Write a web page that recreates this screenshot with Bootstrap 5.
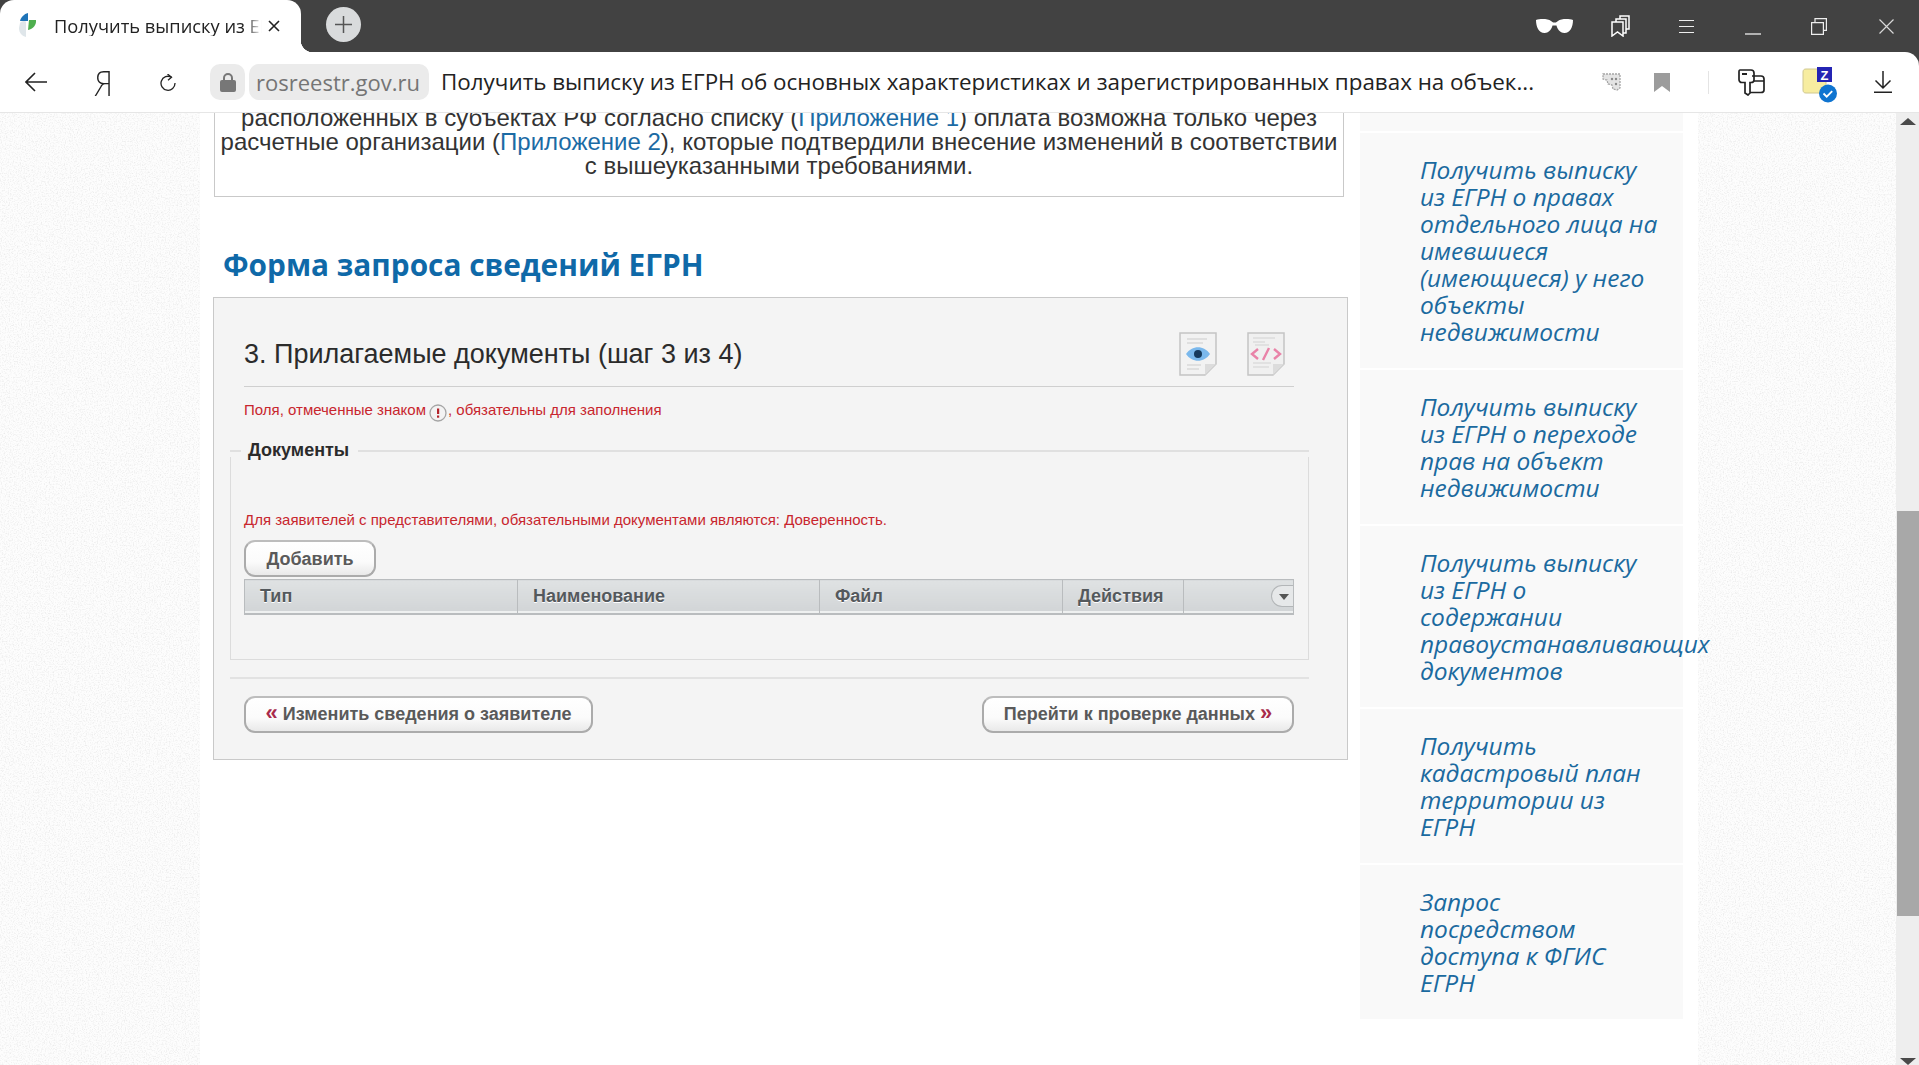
<!DOCTYPE html>
<html lang="ru"><head><meta charset="utf-8"><title>Получить выписку из ЕГРН</title>
<link href="https://cdn.jsdelivr.net/npm/bootstrap@5.3.0/dist/css/bootstrap.min.css" rel="stylesheet">
<style>
html,body{height:100%;margin:0}
body{font-family:"Liberation Sans",Arial,sans-serif;overflow:hidden;background:#fff;color:#333}
svg{display:block;flex:none}
.shell{height:100vh}
.strip{height:52px;background:#424242;flex:none}
.tabx{width:301px;height:52px;background:#fff;border-radius:14px 14px 0 0;position:relative;flex:none}
.tabx::after{content:"";position:absolute;left:100%;bottom:0;width:12px;height:12px;background:radial-gradient(circle at 100% 0,transparent 12px,#fff 12.5px)}
.fav{margin-left:19px;margin-top:13px}
.tabtitle{font:18.3px/1.1 "Open Sans",sans-serif;color:#222;margin-left:17px;margin-top:16px;width:208px;white-space:nowrap;overflow:hidden;-webkit-mask-image:linear-gradient(90deg,#000 92%,transparent);mask-image:linear-gradient(90deg,#000 92%,transparent)}
.tabclose{margin-left:6px;margin-top:20px}
.plus{width:35px;height:35px;border-radius:50%;background:#d9dbdc;margin-left:25px;margin-bottom:4px}
.i-glass{margin-left:auto}.i-marks{margin-left:38px}.i-menu{margin-left:49px}.i-min{margin-left:51px}.i-rest{margin-left:50px}.i-x{margin-left:52px;margin-right:25px}
.toolbar{background:#fff;flex:none;border-bottom:1px solid #e6e6e6;position:relative;box-sizing:content-box;height:60px;margin-bottom:-1px;z-index:2}
.toolbar>*{flex:none}
.cornerwrap{background:#424242;flex:none}
.toolround{border-top-right-radius:14px}
.i-back{margin-left:25px}
.ya{margin-left:46px;width:14px;font:300 36px/1 Lato,"Liberation Sans",sans-serif;color:#222;text-align:center;transform:scaleX(.78)}
.i-reload{margin-left:53px}
.lockpill{width:35px;height:36px;margin-left:34px;background:#ebebeb;border-radius:10px}
.dompill{width:180px;height:36px;margin-left:4px;background:#ebebeb;border-radius:10px;font:22px/36px "Open Sans",sans-serif;color:#757575;padding-left:7px;white-space:nowrap}
.urltitle{margin-left:12px;width:1101px;font:22.4px/36px "Open Sans",sans-serif;color:#222;white-space:nowrap;overflow:hidden}
.i-tr{margin-left:60px}.i-bm{margin-left:33px}.sep{width:1px;height:23px;background:#e4e4e4;margin-left:38px}.i-ext{margin-left:29px}.i-note{margin-left:37px;margin-top:6px}.i-dl{margin-left:36px}
.mainrow{flex:1 1 auto;min-height:0;overflow:hidden}
.gutl{width:200px;flex:none}.gutr{width:198px;flex:none}
.gutl svg,.gutr svg{width:100%;height:100%}
.center{width:1498px;flex:none;position:relative;z-index:1;background:#fff}
.leftc{width:1134px;margin-left:13px;flex:none}
.rightc{width:323px;margin-left:13px;flex:none}
.notice{margin:-6px 3px 0 1px;border:1px solid #c9c9c9;border-top:0;padding-bottom:18px;font-size:24px;line-height:24px;text-align:center;color:#333;white-space:nowrap}
.notice a,.sidecard a{color:#1b6ba5;text-decoration:none}
.formh{font:700 29.8px/40px "Open Sans",sans-serif;color:#0f69a8;margin:48px 0 12px 10px}
.panel{background:#f4f4f4;border:1px solid #c9c9c9;padding:0 38px 26px 16px;width:1135px}
.phead{margin:0 15px 0 14px;border-bottom:1px solid #cfcfcf;padding:34px 9px 10px 0;gap:30px}
.ptitle{font-size:27px;line-height:44px;color:#2b2b2b;margin:0;font-weight:400;margin-right:auto}
.docico{filter:blur(.5px)}
.rednote{color:#c8262e;font-size:15px;line-height:20px}
.rn1{margin:13px 14px 0;height:20px}
.rqi{display:inline-block;vertical-align:-7px;margin:0 1px 0 3px}
.legrow{height:24px;margin-top:19px}
.legrow::before{content:"";width:11px;height:2px;background:#e0e0e0}
.legrow::after{content:"";flex:1;height:2px;background:#e0e0e0}
.legtxt{font-size:18px;font-weight:700;color:#2b2b2b;padding:0 9px 3px 7px;line-height:24px}
.docbox{margin-top:-6px;border:1px solid #dcdcdc;border-top:0;padding:53px 13px 44px 13px;position:relative}
.skbtn{--bs-btn-padding-x:0;--bs-btn-padding-y:0;display:block;height:37px;background:linear-gradient(#fff,#fbfbfb 60%,#e9e9e9);border:2px solid #ababab;border-top-color:#bdbdbd;border-radius:11px;color:#5a5a5a;font-size:18px;font-weight:700;line-height:32px;text-align:center}
.addb{width:132px;margin-top:10px}
.backb{width:349px}.nextb{width:312px}
.arr{color:#a92b4b;font-weight:700;font-size:22px;line-height:20px}
.gridt{width:1050px;margin:2px 0 0;table-layout:fixed;border-collapse:collapse}
.gridt th{height:34px;padding:0 0 0 15px;background:linear-gradient(#dfe2e3,#d1d4d6);border:1px solid #b9bcbe;border-width:1px 0 2px 1px;box-shadow:inset 0 -3px 0 -1px #eef0f0;color:#54595d;font-size:18px;font-weight:700;text-shadow:0 1px 0 #fff;vertical-align:middle}
.gridt th:last-child{border-right:1px solid #b9bcbe;position:relative;padding:0}
.pillx{position:absolute;right:0;top:5px;width:22px;height:22px;border:1px solid #b3b6b8;border-right:0;border-radius:11px 0 0 11px;background:#e6e8e9}
.pillx::after{content:"";position:absolute;left:7px;top:8px;border:5px solid transparent;border-top:6px solid #555;border-bottom:0}
.hdiv{height:2px;background:#e2e2e2;margin-top:17px}
.btnrow{margin:17px 15px 0 14px}
.sidecard{background:#f9f9f9;padding:23px 23px 23px 60px;font:italic 400 24.5px/27px "Open Sans",sans-serif;margin-bottom:2px}
.sidecard a{color:#1b6a9f}
.sidefirst{height:19px;background:#f9f9f9;margin-bottom:2px}
.wordo{white-space:nowrap}
.vscroll{width:23px;flex:none;background:#eee;position:relative}
.thumb{position:absolute;left:1px;right:0;top:399px;height:405px;background:#a8a8a8}
.upa,.dna{position:absolute;left:4px;border:8px solid transparent}
.upa{top:6px;border-bottom:7px solid #4a4a4a;border-top:0}
.dna{bottom:0;border-top:7px solid #4a4a4a;border-bottom:0}
</style></head><body>
<div class="shell d-flex flex-column">
 <div class="strip d-flex align-items-center">
  <div class="tabx d-flex align-items-start align-self-start">
   <svg class="fav" width="18" height="24" viewBox="0 0 18 24"><path d="M1 10c.5-1 2-2 4-2l2 .5V24C3 23 0 20 0 15z" fill="#dfe6ea"/><path d="M1 8C2 4 5 1 9 0v8z" fill="#1f74b8"/><path d="M10 7h7c.6 5-3 9-8 10z" fill="#4faf4f"/></svg>
   <div class="tabtitle">Получить выписку из ЕГРН</div>
   <svg class="tabclose" width="12" height="12" viewBox="0 0 12 12"><path d="M1 1l10 10M11 1L1 11" stroke="#222" stroke-width="1.6"/></svg>
  </div>
  <div class="plus d-flex align-items-center justify-content-center"><svg width="17" height="17" viewBox="0 0 17 17"><path d="M8.5 0v17M0 8.5h17" stroke="#555" stroke-width="1.5"/></svg></div>
  <svg class="i-glass" width="37" height="14" viewBox="0 0 37 14"><path d="M0 1c4-1.400 12-1.400 15 1 1 .8 1.500 1.500 3.500 1.500S21 2.800 22 2c3-2.400 11-2.400 15-1 0 7-3 13-8.500 13-5 0-7.500-5-8-7.500h-4C16 9 13.500 14 8.500 14 3 14 0 8 0 1z" fill="#fff"/></svg>
  <svg class="i-marks" width="19" height="22" viewBox="0 0 19 22" fill="none" stroke="#fff" stroke-width="1.500"><path d="M1 7h11v14l-5.500-4L1 21z"/><path d="M5 7V4h10v14h-3M9 3.500V1h9v13h-3"/></svg>
  <svg class="i-menu" width="15" height="13" viewBox="0 0 15 13"><path d="M0 .5h15M0 6.500h15M0 12.500h15" stroke="#eee" stroke-width="1.200"/></svg>
  <svg class="i-min mt-3" width="16" height="2" viewBox="0 0 16 2"><path d="M0 1h16" stroke="#eee" stroke-width="1.300"/></svg>
  <svg class="i-rest" width="16" height="17" viewBox="0 0 16 17" fill="none" stroke="#eee" stroke-width="1.200"><path d="M.6 4.600h11.800v11.800H.6zM4 4.600V.6h11.400v11.800h-3"/></svg>
  <svg class="i-x" width="15" height="15" viewBox="0 0 15 15"><path d="M.5.500l14 14M14.500.500l-14 14" stroke="#d8d8d8" stroke-width="1.200"/></svg>
 </div>
 <div class="cornerwrap">
 <div class="toolbar toolround d-flex align-items-center">
  <svg class="i-back" width="22" height="20" viewBox="0 0 22 20" fill="none" stroke="#222" stroke-width="1.600"><path d="M22 10H1M10 1l-9 9 9 9"/></svg>
  <div class="ya">Я</div>
  <svg class="i-reload" width="16" height="17" viewBox="0 0 16 17" fill="none" stroke="#222" stroke-width="1.300"><path d="M11.500 3.200A7 7 0 1 0 15 9"/><path d="M7.500 0l4 3.200-3.500 3"/></svg>
  <div class="lockpill d-flex align-items-center justify-content-center"><svg width="16" height="20" viewBox="0 0 16 20"><path d="M4 9V6a4 4 0 0 1 8 0v3" fill="none" stroke="#777" stroke-width="2"/><rect y="8" width="16" height="12" rx="2" fill="#777"/></svg></div>
  <div class="dompill">rosreestr.gov.ru</div>
  <div class="urltitle">Получить выписку из ЕГРН об основных характеристиках и зарегистрированных правах на объек...</div>
  <svg class="i-tr" width="19" height="18" viewBox="0 0 19 18"><path d="M1 1h17v14l-3 2-4-1-1-4-4-1-1-4-4-1z" fill="#e4e4e4" stroke="#a5a5a5" stroke-width="1.300" stroke-dasharray="2 1"/><circle cx="10" cy="6" r="1.200" fill="#888"/><circle cx="14" cy="6" r="1.200" fill="#888"/><circle cx="14" cy="11" r="1.200" fill="#888"/></svg>
  <svg class="i-bm" width="16" height="19" viewBox="0 0 16 19"><path d="M0 0h16v19l-8-6-8 6z" fill="#9c9c9c"/></svg>
  <div class="sep"></div>
  <svg class="i-ext" width="27" height="27" viewBox="0 0 27 27" fill="none" stroke="#222" stroke-width="1.700"><path d="M2 1h11c2 0 3 1.500 3 3v7c0 1.500-1 2.500-3 2.500h-1V24l-2 2-3-2V13.500H4C2 13.500 1 12 1 10.500V3c0-1 .5-2 1-2z"/><path d="M4 5h5" stroke-width="2"/><path d="M14 7h9c2 0 3 1 3 3v11c0 1.500-1 2.500-3 2.500H12M16 12h10"/></svg>
  <svg class="i-note" width="36" height="36" viewBox="0 0 36 36"><path d="M1 5c0-2 1-3 3-3h12l8 6v18H4c-2 0-3-1-3-3z" fill="#f7eda0" stroke="#d0c890"/><rect x="15" y="0" width="15" height="15" fill="#2424b4"/><text x="22.500" y="12.500" font-family="Liberation Sans" font-size="13" font-weight="700" fill="#fff" text-anchor="middle">Z</text><circle cx="26" cy="26.500" r="9" fill="#0f74d0"/><path d="M21.500 26.500l3.200 3.200 5.500-5.500" fill="none" stroke="#fff" stroke-width="1.800"/></svg>
  <svg class="i-dl" width="18" height="22" viewBox="0 0 18 22" fill="none" stroke="#222" stroke-width="1.500"><path d="M9 0v17M1.500 9.500L9 17l7.500-7.500M0 21.200h18"/></svg>
 </div>
 </div>
 <div class="mainrow d-flex">
  <div class="gutl"><svg><defs><filter id="spk" x="0" y="0" width="100%" height="100%"><feTurbulence type="fractalNoise" baseFrequency=".75" numOctaves="2" seed="4"/><feColorMatrix values="0 0 0 0 .8  0 0 0 0 .8  0 0 0 0 .8  2 0 0 0 -.9"/></filter></defs><rect width="100%" height="100%" fill="#fdfdfd"/><rect width="100%" height="100%" filter="url(#spk)"/></svg></div>
  <div class="center d-flex">
   <div class="leftc">
    <div class="notice">расположенных в субъектах РФ согласно списку (<a href="#">Приложение 1</a>) оплата возможна только через<br>расчетные организации (<a href="#">Приложение 2</a>), которые подтвердили внесение изменений в соответствии<br>с вышеуказанными требованиями.</div>
    <h2 class="formh">Форма запроса сведений ЕГРН</h2>
    <div class="panel">
     <div class="phead d-flex align-items-center">
      <h3 class="ptitle">3. Прилагаемые документы (шаг 3 из 4)</h3>
      <svg class="docico" width="38" height="44" viewBox="0 0 38 44"><path d="M1 1h36v31L26 43H1z" fill="#f2f2f2" stroke="#c4c4c4" stroke-width="1.500"/><path d="M37 32H26v11z" fill="#dcdcdc"/><path d="M8 7h20M8 11h16M8 33h14M8 37h12" stroke="#ccc"/><path d="M7 22c6-9 18-9 24 0-6 9-18 9-24 0z" fill="#7ab8ec"/><circle cx="19" cy="22" r="4" fill="#15395c"/></svg>
      <svg class="docico" width="38" height="44" viewBox="0 0 38 44"><path d="M1 1h36v31L26 43H1z" fill="#f0f0f0" stroke="#c4c4c4" stroke-width="1.500"/><path d="M37 32H26v11z" fill="#dcdcdc"/><path d="M6 6h22M6 10h12M8 13h14M6 31h18M6 35h16" stroke="#d2d2d2"/><path d="M11 17l-6 5 6 5M27 17l6 5-6 5M22 16l-6 12" fill="none" stroke="#e983a8" stroke-width="2.400"/></svg>
     </div>
     <div class="rednote rn1">Поля, отмеченные знаком<svg class="rqi" width="18" height="18" viewBox="0 0 18 18"><circle cx="9" cy="9" r="8" fill="#f3f3f3" stroke="#a5a5a5" stroke-width="1.300"/><rect x="8" y="4.500" width="2.200" height="5.500" fill="#b3242c"/><rect x="8" y="11.500" width="2.200" height="2.200" fill="#b3242c"/></svg>, обязательны для заполнения</div>
     <div class="legrow d-flex align-items-center"><span class="legtxt">Документы</span></div>
     <div class="docbox">
      <div class="rednote">Для заявителей с представителями, обязательными документами являются: Доверенность.</div>
      <button type="button" class="btn skbtn addb">Добавить</button>
      <table class="gridt"><colgroup><col style="width:273px"><col style="width:302px"><col style="width:243px"><col style="width:121px"><col></colgroup><thead><tr><th>Тип</th><th>Наименование</th><th>Файл</th><th>Действия</th><th><span class="pillx"></span></th></tr></thead></table>
     </div>
     <div class="hdiv"></div>
     <div class="btnrow d-flex justify-content-between">
      <button type="button" class="btn skbtn backb"><span class="arr">«</span> Изменить сведения о заявителе</button>
      <button type="button" class="btn skbtn nextb">Перейти к проверке данных <span class="arr">»</span></button>
     </div>
    </div>
   </div>
   <div class="rightc">
    <div class="sidefirst"></div>
    <div class="sidecard"><a href="#">Получить выписку из ЕГРН о правах отдельного лица на имевшиеся (имеющиеся) у него объекты недвижимости</a></div>
    <div class="sidecard"><a href="#">Получить выписку из ЕГРН о переходе прав на объект недвижимости</a></div>
    <div class="sidecard"><a href="#">Получить выписку из ЕГРН о содержании <span class="wordo">правоустанавливающих</span> документов</a></div>
    <div class="sidecard"><a href="#">Получить кадастровый план территории из ЕГРН</a></div>
    <div class="sidecard"><a href="#">Запрос посредством доступа к ФГИС ЕГРН</a></div>
   </div>
  </div>
  <div class="gutr"><svg><rect width="100%" height="100%" fill="#fdfdfd"/><rect width="100%" height="100%" filter="url(#spk)"/></svg></div>
  <div class="vscroll"><span class="upa"></span><span class="thumb"></span><span class="dna"></span></div>
 </div>
</div>
<script src="https://cdn.jsdelivr.net/npm/bootstrap@5.3.0/dist/js/bootstrap.bundle.min.js"></script>
</body></html>
